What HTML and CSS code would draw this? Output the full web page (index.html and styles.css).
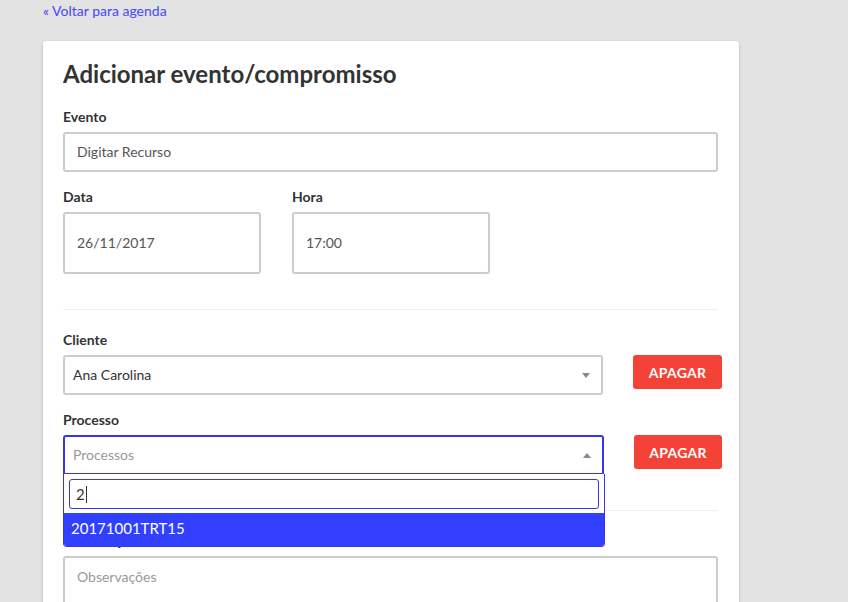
FILE: index.html
```html
<!DOCTYPE html>
<html lang="pt">
<head>
<meta charset="utf-8">
<title>Adicionar evento</title>
<link rel="stylesheet" href="styles.css">
</head>
<body>
<div class="page">
  <a class="back" href="#"><span class="raquo">«</span> Voltar para agenda</a>
  <div class="card">
    <h1 class="title">Adicionar evento/compromisso</h1>
    <div class="field">
      <label class="label">Evento</label>
      <div class="input">Digitar Recurso</div>
    </div>
    <div class="row">
      <div class="field col">
        <label class="label">Data</label>
        <div class="input tall">26/11/2017</div>
      </div>
      <div class="field col">
        <label class="label">Hora</label>
        <div class="input tall">17:00</div>
      </div>
    </div>
    <hr class="sep">
    <div class="field">
      <label class="label">Cliente</label>
      <div class="selrow">
        <div class="select"><span>Ana Carolina</span><span class="arrow down"></span></div>
        <button class="btn">APAGAR</button>
      </div>
    </div>
    <div class="field">
      <label class="label">Processo</label>
      <div class="selrow">
        <div class="selwrap">
          <div class="select open"><span class="ph">Processos</span><span class="arrow up"></span></div>
          <div class="dropdown">
            <div class="search">2<span class="caret"></span></div>
            <div class="option">20171001TRT15</div>
          </div>
        </div>
        <button class="btn">APAGAR</button>
      </div>
    </div>
    <hr class="sep">
    <div class="field">
      <label class="label">Observações</label>
      <div class="textarea"><span class="ph">Observações</span></div>
    </div>
  </div>
</div>
</body>
</html>
```
FILE: styles.css
```css
html, body {
  margin: 0;
  padding: 0;
  background: #e3e3e3;
  font-family: Lato, "Open Sans", sans-serif;
  color: #333;
  overflow: hidden;
}
.page {
  padding: 2px 0 0 43px;
  width: 696px;
}
.back {
  display: block;
  font-size: 14px;
  line-height: 18px;
  color: #4848f2;
  text-decoration: none;
}
.raquo {
  font-size: 14px;
}
.card {
  margin-top: 21px;
  background: #fff;
  border-radius: 3px;
  box-shadow: 0 1px 3px rgba(0,0,0,0.22);
  padding: 18px 21px 40px 20px;
}
.title {
  margin: 0 0 18px 0;
  font-size: 24px;
  line-height: 30px;
  font-weight: 700;
  color: #333;
}
.field {
  margin-bottom: 15px;
}
.label {
  display: block;
  font-weight: 700;
  font-size: 14px;
  line-height: 20px;
  margin-bottom: 5px;
  color: #333;
}
.input {
  box-sizing: border-box;
  height: 40px;
  border: 2px solid #ccc;
  border-radius: 3px;
  padding: 0 12px;
  font-size: 14px;
  line-height: 36px;
  color: #555;
}
.input.tall {
  height: 62px;
  line-height: 58px;
}
.row {
  display: flex;
  gap: 31px;
}
.col {
  width: 198px;
  margin-bottom: 0;
}
.sep {
  border: 0;
  border-top: 1px solid #eee;
  margin: 35px 0 20px 0;
}
.selrow {
  display: flex;
  align-items: flex-start;
  gap: 30px;
  width: 659px;
}
.selwrap {
  position: relative;
  width: 541px;
}
.select {
  box-sizing: border-box;
  width: 541px;
  height: 40px;
  border: 2px solid #ccc;
  border-radius: 3px;
  padding: 0 8px;
  font-size: 14px;
  line-height: 36px;
  color: #333;
  display: flex;
  justify-content: space-between;
  align-items: center;
}
.select.open {
  border-color: #3535f5;
  border-bottom-left-radius: 0;
  border-bottom-right-radius: 0;
}
.ph {
  color: #999;
}
.arrow {
  width: 0;
  height: 0;
  border-left: 4px solid transparent;
  border-right: 4px solid transparent;
  margin-right: 3px;
}
.arrow.down {
  border-top: 5px solid #888;
}
.arrow.up {
  border-bottom: 5px solid #888;
}
.btn {
  width: 89px;
  height: 34px;
  background: #f44336;
  color: #fff;
  border: 0;
  border-radius: 3px;
  font-family: Lato, "Open Sans", sans-serif;
  font-weight: 700;
  font-size: 14px;
  letter-spacing: 0.3px;
  padding: 0;
}
.dropdown {
  position: absolute;
  top: 39px;
  left: 0;
  width: 542px;
  box-sizing: border-box;
  background: #fff;
  border: 1px solid #3535f5;
  border-top: 0;
  border-radius: 0 0 4px 4px;
  overflow: hidden;
  z-index: 5;
}
.search {
  box-sizing: border-box;
  margin: 5px 5px 4px 5px;
  height: 30px;
  border: 1px solid #3535f5;
  border-radius: 3px;
  padding: 0 6px;
  font-size: 15px;
  line-height: 28px;
  color: #333;
  display: flex;
  align-items: center;
}
.caret {
  display: inline-block;
  width: 1px;
  height: 17px;
  background: #333;
  margin-left: 1px;
}
.option {
  background: #3140ff;
  color: #fff;
  font-size: 15px;
  height: 33px;
  line-height: 31px;
  padding: 0 7px;
}
.textarea {
  box-sizing: border-box;
  height: 100px;
  border: 2px solid #ccc;
  border-radius: 3px;
  padding: 9px 12px;
  font-size: 14px;
  line-height: 20px;
}
```
